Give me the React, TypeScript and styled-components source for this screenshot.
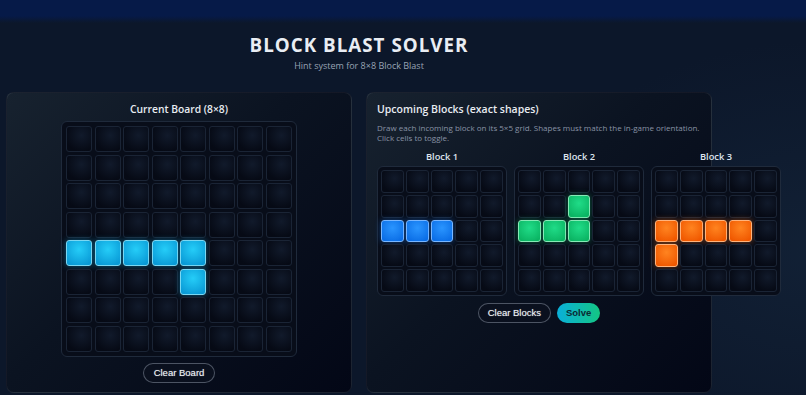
import React from "react";
import styled, { createGlobalStyle, css } from "styled-components";

const GlobalStyle = createGlobalStyle`
  html, body { margin: 0; padding: 0; }
  body {
    width: 806px;
    height: 395px;
    overflow: hidden;
    font-family: "Open Sans", "Noto Sans", sans-serif;
    background:
      radial-gradient(ellipse 420px 300px at 820px 250px, rgba(22, 40, 62, 0.55), rgba(0,0,0,0) 70%),
      linear-gradient(180deg, #061a48 0px, #061a48 16px, #0c172a 23px, #0c172a 100%);
    color: #e6eaf0;
  }
`;

const Page = styled.div`
  width: 706px;
  margin-left: 6px;
  padding-top: 33px;
`;

const Header = styled.header`
  display: flex;
  flex-direction: column;
  align-items: center;
`;

const Title = styled.h1`
  margin: 0;
  font-size: 18.8px;
  line-height: 24px;
  font-weight: 700;
  letter-spacing: 1px;
  color: #e9edf3;
`;

const Subtitle = styled.div`
  margin-top: 3px;
  font-size: 9px;
  line-height: 12px;
  color: #98a3b4;
`;

const Columns = styled.main`
  margin-top: 20px;
  display: grid;
  grid-template-columns: 346px 346px;
  gap: 14px;
  align-items: stretch;
`;

const Panel = styled.section<{ $center?: boolean }>`
  box-sizing: border-box;
  border: 1px solid rgba(255, 255, 255, 0.07);
  border-radius: 8px;
  padding: 8px 10px 9px;
  background: linear-gradient(135deg, #17222f 0%, #0b1321 45%, #030716 100%);
  display: flex;
  flex-direction: column;
  align-items: ${(p) => (p.$center ? "center" : "stretch")};
`;

const PanelTitle = styled.h2<{ $large?: boolean }>`
  margin: 0;
  font-size: ${(p) => (p.$large ? "10.5px" : "10.3px")};
  line-height: 16px;
  font-weight: 600;
  color: #e8ecf2;
`;

const Description = styled.p`
  margin: 6px 0 0;
  font-size: 8px;
  line-height: 10px;
  color: #8993a5;
`;

const Frame = styled.div<{ $cols: number; $cell: string; $gap: string; $pad: string; $w?: string }>`
  box-sizing: border-box;
  display: grid;
  grid-template-columns: repeat(${(p) => p.$cols}, ${(p) => p.$cell});
  gap: ${(p) => p.$gap};
  padding: ${(p) => p.$pad};
  ${(p) => p.$w && css`width: ${p.$w};`}
  background: #080d19;
  border: 1px solid #1f2a3b;
  border-radius: 6px;
`;

type Tone = "empty" | "cyan" | "blue" | "green" | "orange";

const tones: Record<Exclude<Tone, "empty">, { c: string; e: string; b: string; g: string }> = {
  cyan: { c: "#25cdf8", e: "#0a9ad6", b: "#7ad7f2", g: "rgba(20, 180, 240, 0.45)" },
  blue: { c: "#2a95ff", e: "#0b6ee6", b: "#78b6ff", g: "rgba(30, 130, 255, 0.45)" },
  green: { c: "#20dc88", e: "#0bb463", b: "#86eab6", g: "rgba(20, 210, 120, 0.4)" },
  orange: { c: "#ff8420", e: "#f05800", b: "#ffb37c", g: "rgba(255, 110, 20, 0.45)" },
};

const Cell = styled.div<{ $tone: Tone }>`
  box-sizing: border-box;
  aspect-ratio: 1 / 1;
  border-radius: 3px;
  ${(p) =>
    p.$tone === "empty"
      ? css`
          background: radial-gradient(circle at 60% 35%, #111a2b 0%, #060a15 75%);
          border: 1px solid #1a2435;
        `
      : css`
          background: radial-gradient(circle at 50% 35%, ${tones[p.$tone].c} 0%, ${tones[p.$tone].e} 85%);
          border: 1px solid ${tones[p.$tone].b};
          box-shadow: 0 0 6px ${tones[p.$tone].g};
        `}
`;

const BoardWrap = styled.div`
  margin-top: 4px;
`;

const PillButton = styled.button<{ $primary?: boolean }>`
  box-sizing: border-box;
  height: 20px;
  padding: 0 9px;
  border-radius: 999px;
  font-family: "Liberation Sans", Arial, sans-serif;
  font-size: 9.5px;
  cursor: pointer;
  ${(p) =>
    p.$primary
      ? css`
          border: none;
          background: linear-gradient(90deg, #0aafd9 0%, #14c683 100%);
          color: #0a2a34;
          font-weight: 700;
        `
      : css`
          border: 1px solid rgba(200, 212, 230, 0.35);
          background: #0a101e;
          color: #eef2f7;
          text-shadow: 0 0 1px rgba(255, 255, 255, 0.5);
        `}
`;

const BoardButton = styled(PillButton)`
  margin-top: 6px;
  padding: 0 10px;
`;

const BlocksRow = styled.div`
  margin-top: 8px;
  display: grid;
  grid-template-columns: repeat(3, 130px);
  gap: 7px;
  width: max-content;
`;

const BlockColumn = styled.div`
  display: flex;
  flex-direction: column;
  align-items: center;
`;

const BlockLabel = styled.div`
  font-size: 9.3px;
  line-height: 12px;
  font-weight: 600;
  color: #dfe5ee;
  margin-bottom: 3px;
`;

const Actions = styled.div`
  margin-top: 7px;
  display: flex;
  justify-content: center;
  gap: 6px;
`;

const boardFilled = new Set(["4-0", "4-1", "4-2", "4-3", "4-4", "5-4"]);

const blocks: { name: string; tone: Tone; cells: string[] }[] = [
  { name: "Block 1", tone: "blue", cells: ["2-0", "2-1", "2-2"] },
  { name: "Block 2", tone: "green", cells: ["1-2", "2-0", "2-1", "2-2"] },
  { name: "Block 3", tone: "orange", cells: ["2-0", "2-1", "2-2", "2-3", "3-0"] },
];

const range = (n: number) => Array.from({ length: n }, (_, i) => i);

export default function App() {
  return (
    <>
      <GlobalStyle />
      <Page>
        <Header>
          <Title>BLOCK BLAST SOLVER</Title>
          <Subtitle>Hint system for 8×8 Block Blast</Subtitle>
        </Header>
        <Columns>
          <Panel $center>
            <PanelTitle>Current Board (8×8)</PanelTitle>
            <BoardWrap>
              <Frame $cols={8} $cell="26px" $gap="2.5px" $pad="4px">
                {range(8).map((r) =>
                  range(8).map((c) => (
                    <Cell key={`${r}-${c}`} $tone={boardFilled.has(`${r}-${c}`) ? "cyan" : "empty"} />
                  ))
                )}
              </Frame>
            </BoardWrap>
            <BoardButton>Clear Board</BoardButton>
          </Panel>
          <Panel>
            <PanelTitle $large>Upcoming Blocks (exact shapes)</PanelTitle>
            <Description>
              Draw each incoming block on its 5×5 grid. Shapes must match the in-game orientation.
              <br />
              Click cells to toggle.
            </Description>
            <BlocksRow>
              {blocks.map((b) => (
                <BlockColumn key={b.name}>
                  <BlockLabel>{b.name}</BlockLabel>
                  <Frame $cols={5} $cell="1fr" $gap="2px" $pad="3px" $w="130px">
                    {range(5).map((r) =>
                      range(5).map((c) => (
                        <Cell key={`${r}-${c}`} $tone={b.cells.includes(`${r}-${c}`) ? b.tone : "empty"} />
                      ))
                    )}
                  </Frame>
                </BlockColumn>
              ))}
            </BlocksRow>
            <Actions>
              <PillButton>Clear Blocks</PillButton>
              <PillButton $primary>Solve</PillButton>
            </Actions>
          </Panel>
        </Columns>
      </Page>
    </>
  );
}
